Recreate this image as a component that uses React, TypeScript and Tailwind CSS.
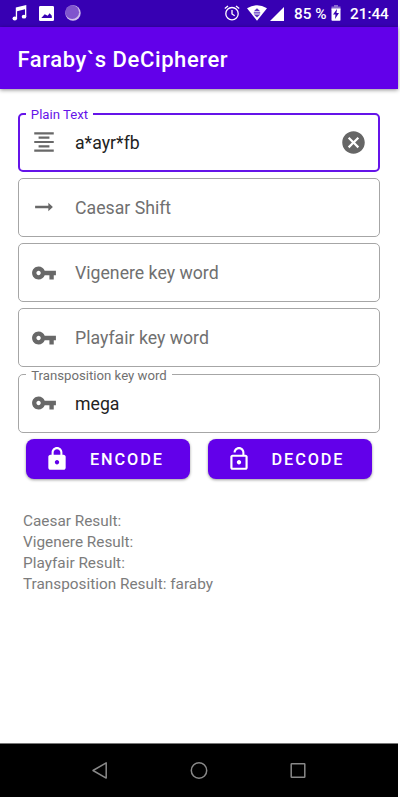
import type { ReactNode } from "react";

const KEY =
  "M12.65 10C11.83 7.67 9.61 6 7 6c-3.31 0-6 2.69-6 6s2.69 6 6 6c2.61 0 4.83-1.67 5.65-4H17v4h4v-4h2v-4H12.65zM7 14c-1.1 0-2-.9-2-2s.9-2 2-2 2 .9 2 2-.9 2-2 2z";
const CENTER = "M7 15v2h10v-2H7zm-4 6h18v-2H3v2zm0-8h18v-2H3v2zm4-6v2h10V7H7zM3 3v2h18V3H3z";
const ARROW = "M16.01 10.900H3.800v2.200h12.210v2.900L20.200 12l-4.190-4z";
const CANCEL =
  "M12 2C6.47 2 2 6.47 2 12s4.47 10 10 10 10-4.47 10-10S17.53 2 12 2zm5 13.59L15.59 17 12 13.41 8.41 17 7 15.59 10.59 12 7 8.41 8.41 7 12 10.59 15.59 7 17 8.41 13.41 12 17 15.59z";
const LOCK =
  "M18 8h-1V6c0-2.76-2.24-5-5-5S7 3.24 7 6v2H6c-1.1 0-2 .9-2 2v10c0 1.1.9 2 2 2h12c1.1 0 2-.9 2-2V10c0-1.1-.9-2-2-2zm-6 9c-1.1 0-2-.9-2-2s.9-2 2-2 2 .9 2 2-.9 2-2 2zm3.1-9H8.9V6c0-1.71 1.39-3.1 3.1-3.1 1.71 0 3.1 1.39 3.1 3.1v2z";
const LOCK_OPEN =
  "M12 17c1.1 0 2-.9 2-2s-.9-2-2-2-2 .9-2 2 .9 2 2 2zm6-9h-1V6c0-2.76-2.24-5-5-5S7 3.24 7 6h1.9c0-1.71 1.39-3.1 3.1-3.1 1.71 0 3.1 1.39 3.1 3.1v2H6c-1.1 0-2 .9-2 2v10c0 1.1.9 2 2 2h12c1.1 0 2-.9 2-2V10c0-1.1-.9-2-2-2zm0 12H6V10h12v10z";

function Icon({ d, className }: { d: string; className: string }) {
  return (
    <svg viewBox="0 0 24 24" fill="currentColor" className={`shrink-0 ${className}`}>
      <path d={d} />
    </svg>
  );
}

type FieldProps = {
  icon: string;
  label: string;
  labelWidth?: string;
  value?: string;
  focused?: boolean;
  trailing?: ReactNode;
};

function Field({ icon, label, labelWidth = "", value, focused, trailing }: FieldProps) {
  const border = focused
    ? "border-2 border-[#6514e9] pl-[11.5px] pr-[11px]"
    : "border border-[#a6a6a6] pl-[12.5px] pr-[12px]";
  return (
    <div className={`relative flex h-[59px] items-center rounded-[5px] ${border}`}>
      {value && (
        <span
          className={`absolute flex h-4 items-center justify-center whitespace-nowrap bg-white text-[13.2px] leading-4 ${labelWidth} ${
            focused ? "left-[6.5px] top-[-8px] text-[#6514e9]" : "left-[7.5px] top-[-7px] text-[#707070]"
          }`}
        >
          {label}
        </span>
      )}
      <Icon d={icon} className="size-[26px] text-[#686868]" />
      <span className={`ml-[18px] flex-1 text-[17.7px] ${value ? "pt-[1.500px] text-[#222]" : "pt-px text-[#707070]"}`}>
        {value ?? label}
      </span>
      {trailing}
    </div>
  );
}

function ActionButton({ icon, text }: { icon: string; text: string }) {
  return (
    <button className="flex h-10 w-[164px] items-center rounded-[8px] bg-[#6200ea] pl-[18px] text-white shadow-[0_1px_3px_rgba(0,0,0,0.4)]">
      <Icon d={icon} className="size-[26px]" />
      <span className="ml-[20px] pt-[2px] text-[16.3px] font-medium tracking-[1.9px]">{text}</span>
    </button>
  );
}

function StatusBar() {
  return (
    <div className="flex h-[26.500px] items-center bg-[#3700b3] text-white">
      <svg viewBox="0 0 15 16" className="ml-[12px] h-4 w-[15px]" fill="currentColor">
        <path d="M3.800 2.500 14.300 0v11.800H13V4.300L5.100 6.200v7.400H3.800z" />
        <ellipse cx="2.800" cy="13.500" rx="2.300" ry="1.900" />
        <ellipse cx="12" cy="11.700" rx="2.300" ry="1.900" />
      </svg>
      <svg viewBox="0 0 15 15" className="ml-[12px] size-[15px]" fill="currentColor">
        <path fillRule="evenodd" d="M1.3 0h12.4Q15 0 15 1.3v12.4q0 1.3-1.3 1.3H1.3Q0 15 0 13.700V1.3Q0 0 1.3 0zM2.300 12h10.500V9.800L10.600 7.300 8.700 9.800 5.700 8.300z" />
      </svg>
      <svg viewBox="0 0 16 16" className="ml-[11px] size-4">
        <circle cx="8" cy="8" r="7.700" fill="#d1c0ec" />
        <circle cx="7.200" cy="7.200" r="6.900" fill="#8055cd" />
      </svg>
      <svg viewBox="0 0 16 16" className="ml-[143px] size-4" fill="none" stroke="currentColor" strokeWidth="1.300">
        <circle cx="8" cy="8.700" r="6.200" />
        <path d="M8 5v4l2.700 1.700M.8 3.500 4 .9M15.200 3.500 12 .9" />
      </svg>
      <svg viewBox="0 0 20 16" className="ml-[7px] h-4 w-5">
        <path d="M0 3.200Q10-2.800 20 3.200L10 15.800z" fill="currentColor" />
        <path d="m6.800 6.300 3.200-3 3.200 3zM6.800 7.300h6.400v1.300H6.800zM6.800 9.500h6.400L10 12.400z" fill="#5b30c0" />
      </svg>
      <svg viewBox="0 0 14 14" className="ml-[3px] mt-px size-[14px]" fill="currentColor">
        <path d="M14 0v14H0z" />
      </svg>
      <span className="ml-[10px] w-[35px] whitespace-nowrap pt-px text-[15.300px] font-medium leading-5">85 %</span>
      <svg viewBox="0 0 10 16" className="ml-[2px] h-4 w-[10px]">
        <path d="M3 0h4v1.500h2.500V5H.5V1.500H3z" fill="#8b6bd1" />
        <path d="M.5 3.500h9V15q0 .8-.8.8H1.300Q.5 15.800.5 15z" fill="white" />
        <path d="m6 4-4 5.500h2.500L4 14l4-6H5.500z" fill="#3700b3" />
      </svg>
      <span className="ml-[9px] whitespace-nowrap pt-px text-[15.300px] font-medium leading-5">21:44</span>
    </div>
  );
}

export default function App() {
  return (
    <div className="min-h-[797px] bg-white">
      <div className="flex h-[797px] w-[398px] flex-col bg-white font-['Roboto','Liberation_Sans',sans-serif]">
        <StatusBar />
        <header className="flex h-[62px] items-center bg-[#6200ea] pl-[17.500px] text-white shadow-[0_1px_4px_rgba(0,0,0,0.45)]">
          <h1 className="pt-[4px] text-[22px] font-medium tracking-[0.6px]">Faraby`s DeCipherer</h1>
        </header>
        <main className="flex flex-1 flex-col">
          <div className="ml-[17.500px] mt-[24.050px] flex w-[362.800px] flex-col gap-[6.300px]">
            <Field
              icon={CENTER}
              label="Plain Text"
              labelWidth="w-[67px]"
              value="a*ayr*fb"
              focused
              trailing={<Icon d={CANCEL} className="size-[27px] text-[#666]" />}
            />
            <Field icon={ARROW} label="Caesar Shift" />
            <Field icon={KEY} label="Vigenere key word" />
            <Field icon={KEY} label="Playfair key word" />
            <Field icon={KEY} label="Transposition key word" labelWidth="w-[146px]" value="mega" />
          </div>
          <div className="ml-[26px] mt-[6.500px] flex gap-[17.500px]">
            <ActionButton icon={LOCK} text="ENCODE" />
            <ActionButton icon={LOCK_OPEN} text="DECODE" />
          </div>
          <div className="ml-[23px] mt-[32px] text-[15.350px] leading-[21px] text-[#7c7c7c]">
            <p>Caesar Result:</p>
            <p>Vigenere Result:</p>
            <p>Playfair Result:</p>
            <p>Transposition Result: faraby</p>
          </div>
        </main>
        <nav className="flex h-[54px] items-center border-t border-[#777] bg-black pl-[91px]">
          <svg viewBox="0 0 18 18" className="size-[18px]" fill="none" stroke="#888" strokeWidth="1.500" strokeLinejoin="round">
            <path d="M2 8.500 15.200 .9v15.200z" />
          </svg>
          <svg viewBox="0 0 18 18" className="ml-[81px] size-[18px]" fill="none" stroke="#888" strokeWidth="1.500">
            <circle cx="9" cy="8.500" r="7.700" />
          </svg>
          <svg viewBox="0 0 18 18" className="ml-[81px] size-[18px]" fill="none" stroke="#888" strokeWidth="1.500">
            <rect x="2.200" y="1.700" width="13.600" height="13.600" rx="0.500" />
          </svg>
        </nav>
      </div>
    </div>
  );
}
